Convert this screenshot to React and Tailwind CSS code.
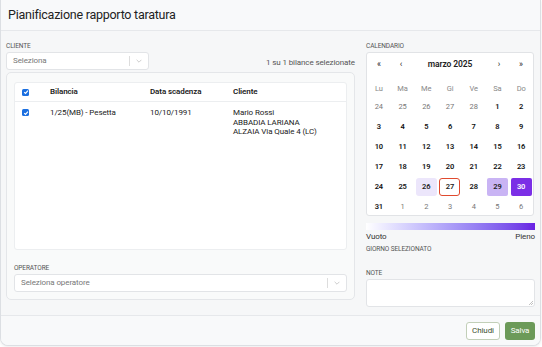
import React from 'react';

const weekdays = ['Lu', 'Ma', 'Me', 'Gi', 'Ve', 'Sa', 'Do'];

const weeks = [
  [[24, 0], [25, 0], [26, 0], [27, 0], [28, 0], [1, 1], [2, 1]],
  [[3, 1], [4, 1], [5, 1], [6, 1], [7, 1], [8, 1], [9, 1]],
  [[10, 1], [11, 1], [12, 1], [13, 1], [14, 1], [15, 1], [16, 1]],
  [[17, 1], [18, 1], [19, 1], [20, 1], [21, 1], [22, 1], [23, 1]],
  [[24, 1], [25, 1], [26, 1], [27, 1], [28, 1], [29, 1], [30, 1]],
  [[31, 1], [1, 0], [2, 0], [3, 0], [4, 0], [5, 0], [6, 0]],
];

function Check() {
  return (
    <span className="flex h-[7px] w-[7px] items-center justify-center rounded-[1.5px] bg-[#1b6fe0]">
      <svg width="6" height="6" viewBox="0 0 10 10" fill="none" stroke="white" strokeWidth="2">
        <path d="M2 5.2 4.2 7.4 8.2 2.8" />
      </svg>
    </span>
  );
}

function Chevron() {
  return (
    <div className="flex items-center">
      <span className="h-[10px] w-px bg-[#ddd]" />
      <svg className="mx-[6px]" width="6" height="4" viewBox="0 0 10 6" fill="none" stroke="#bbb" strokeWidth="1.2">
        <path d="M1 1l4 4 4-4" />
      </svg>
    </div>
  );
}

function dayClass(d, cur) {
  if (!cur) return 'text-[#777] font-normal';
  if (d === 26) return 'bg-[#ece6fb] text-[#222] font-semibold rounded-[3px]';
  if (d === 27) return 'border border-[#e04a2f] text-[#222] font-semibold rounded-[3px] bg-white';
  if (d === 29) return 'bg-[#c9b4f4] text-[#222] font-semibold rounded-[2px]';
  if (d === 30) return 'bg-[#7b2fe6] text-white font-semibold rounded-[2px]';
  return 'text-[#111] font-semibold';
}

export default function App() {
  return (
    <div className="h-[347px] w-[542px] bg-white font-['Roboto',sans-serif] tracking-[-0.1px]">
      <div className="flex h-[346px] w-[541px] flex-col overflow-hidden rounded-b-[8px] border-b border-r border-l border-[#dcdfe3] bg-[#f8f9fa] shadow-[0_1px_3px_rgba(0,0,0,0.08)]">
        {/* Header */}
        <div className="flex h-[31px] items-center border-b border-[#e6e8eb] px-[7px] text-[12.5px] tracking-[-0.25px] text-[#222]">
          Pianificazione rapporto taratura
        </div>

        {/* Body */}
        <div className="flex h-[284px] gap-[11px] bg-[#f6f7f8] px-[5px] pt-[11px]">
          {/* Left */}
          <div className="flex w-[350px] flex-col">
            <div className="text-[6.5px] leading-[8px] text-[#555]">CLIENTE</div>
            <div className="mt-[2px] flex items-end justify-between">
              <div className="flex h-[18px] w-[143px] items-center justify-between rounded-[3px] border border-[#e2e4e7] bg-white pl-[6px]">
                <span className="text-[8px] text-[#777]">Seleziona</span>
                <Chevron />
              </div>
              <span className="mb-[1px] text-[8px] text-[#555]">1 su 1 bilance selezionate</span>
            </div>
            <div className="mt-[2px] flex w-[349px] flex-col rounded-[5px] border border-[#e4e6e9] bg-[#f9fafa] px-[7px] pb-[7px] pt-[9px]">
              <div className="h-[168px] w-[333px] rounded-[3px] border border-[#eceef0] bg-white">
                <div className="flex h-[19px] items-center border-b border-[#eceef0] text-[8px] font-semibold text-[#222]">
                  <div className="w-[35px] pl-[7px]"><Check /></div>
                  <div className="w-[100px]">Bilancia</div>
                  <div className="w-[83px]">Data scadenza</div>
                  <div>Cliente</div>
                </div>
                <div className="flex pt-[6px] text-[8px] leading-[9.7px] text-[#222]">
                  <div className="w-[35px] pl-[7px] pt-[1px]"><Check /></div>
                  <div className="w-[100px]">1/25(MB) - Pesetta</div>
                  <div className="w-[83px]">10/10/1991</div>
                  <div>
                    <div>Mario Rossi</div>
                    <div>ABBADIA LARIANA</div>
                    <div>ALZAIA Via Quale 4 (LC)</div>
                  </div>
                </div>
              </div>
              <div className="mt-[14px] text-[6.5px] leading-[8px] text-[#555]">OPERATORE</div>
              <div className="mt-[2px] flex h-[18px] w-[333px] items-center justify-between rounded-[3px] border border-[#e2e4e7] bg-white pl-[6px]">
                <span className="text-[8px] text-[#777]">Seleziona operatore</span>
                <Chevron />
              </div>
            </div>
          </div>

          {/* Right */}
          <div className="flex w-[169px] flex-col">
            <div className="text-[6.5px] leading-[8px] text-[#555]">CALENDARIO</div>
            <div className="mt-[2px] h-[164px] w-[168px] rounded-[3px] border border-[#e1e3e6] bg-white">
              <div className="flex h-[22px] items-center text-[8.5px] text-[#222]">
                <span className="w-[24px] text-center">«</span>
                <span className="w-[20px] text-center">‹</span>
                <span className="flex-1 text-center font-semibold">marzo 2025</span>
                <span className="w-[20px] text-center">›</span>
                <span className="w-[24px] text-center">»</span>
              </div>
              <div className="mt-[6px] grid h-[16px] grid-cols-7 items-center text-center text-[7.5px] text-[#888]">
                {weekdays.map((w) => (
                  <span key={w}>{w}</span>
                ))}
              </div>
              {weeks.map((row, i) => (
                <div key={i} className="grid h-[20px] grid-cols-7 items-center justify-items-center text-[7.5px]">
                  {row.map(([d, cur], j) => (
                    <span key={j} className={`flex h-[18px] w-[21px] items-center justify-center ${dayClass(d, cur)}`}>
                      {d}
                    </span>
                  ))}
                </div>
              ))}
            </div>
            <div className="mt-[7px] h-[7px] w-[169px] bg-gradient-to-r from-white to-[#6a1fe3]" />
            <div className="mt-[2px] flex justify-between text-[8px] leading-[10px] text-[#333]">
              <span>Vuoto</span>
              <span>Pieno</span>
            </div>
            <div className="mt-[3px] text-[6.5px] leading-[8px] text-[#555]">GIORNO SELEZIONATO</div>
            <div className="mt-[16px] text-[6.5px] leading-[8px] text-[#555]">NOTE</div>
            <div className="relative mt-[2px] h-[28px] w-[169px] rounded-[3px] border border-[#e2e4e7] bg-white">
              <svg className="absolute bottom-[1px] right-[1px]" width="5" height="5" viewBox="0 0 5 5" stroke="#999" strokeWidth="0.6">
                <path d="M5 1 1 5M5 3 3 5" />
              </svg>
            </div>
          </div>
        </div>

        {/* Footer */}
        <div className="flex flex-1 items-center justify-end gap-[5px] border-t border-[#e6e8eb] bg-[#f8f9fa] pr-[5px]">
          <button className="h-[18px] w-[34px] rounded-[3px] border border-[#c2cfb8] bg-white text-[8px] text-[#3c4f30]">
            Chiudi
          </button>
          <button className="h-[18px] w-[30px] rounded-[3px] bg-[#6c9a59] text-[8px] text-white">
            Salva
          </button>
        </div>
      </div>
    </div>
  );
}
